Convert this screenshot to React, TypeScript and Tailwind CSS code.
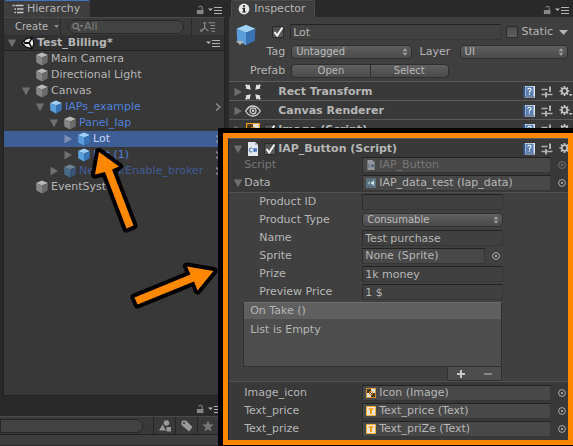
import type { ReactNode } from "react";
import { clsx } from "clsx";

/* ---------- icons ---------- */

function Cube({ tone = "gray", className = "size-3.5" }: { tone?: "gray" | "blue"; className?: string }) {
  const c = tone === "blue" ? ["#9fd0f5", "#5a9fdc", "#3a73b4"] : ["#b9b9b9", "#868686", "#6a6a6a"];
  return (
    <svg viewBox="0 0 14 14" className={clsx("shrink-0", className)} aria-hidden="true">
      <path d="M7 .5 13 3 7 5.6 1 3Z" fill={c[0]} />
      <path d="M1 3 7 5.6V13.5L1.4 10.6Z" fill={c[1]} />
      <path d="M13 3 7 5.6V13.5l5.6-2.9Z" fill={c[2]} />
    </svg>
  );
}

function Triangle({ open, light }: { open?: boolean; light?: boolean }) {
  return (
    <svg viewBox="0 0 10 10" className="size-2.5 shrink-0" aria-hidden="true">
      <path d={open ? "M.8 1.5h8.4L5 9.2Z" : "M1.5.8v8.4L9 5Z"} fill={light ? "#7f90b5" : "#6f6f6f"} />
    </svg>
  );
}

function UnityLogo() {
  return (
    <svg viewBox="0 0 14 14" className="size-3.5 shrink-0" aria-hidden="true">
      <path d="M.3 7 4.5 2.4 11.3.5 13.5 7l-2.2 6.5-6.8-1.9Z" fill="#0c0c0c" />
      <path d="M4.800 3.700 9.800 2.200 7.800 5.900H3.500Z M3.500 8.100h4.300l2 3.700-5-1.500L2 7l.8-1Z M11.200 2.900 12.300 7l-1.100 4.100L9 7Z" fill="#efefef" />
    </svg>
  );
}

function Lock() {
  return (
    <svg viewBox="0 0 9 10" className="h-2.5 w-2 shrink-0" aria-hidden="true">
      <path d="M1 5h7.4v4.6H1Z" fill="#858585" />
      <path d="M3 2.2Q3.6.8 5 .8q2 0 2 2V5" fill="none" stroke="#858585" strokeWidth="1.2" />
    </svg>
  );
}

function PaneMenu() {
  return (
    <svg viewBox="0 0 14 8" className="h-2 w-3.5 shrink-0" aria-hidden="true">
      <path d="M0 2.5h5L2.5 5Z" fill="#b4b4b4" />
      <path d="M6 1.5h8M6 4.500h8M6 7.500h8" stroke="#b4b4b4" />
    </svg>
  );
}

function ListIcon() {
  return (
    <svg viewBox="0 0 11 10" className="h-2.5 w-3 shrink-0" aria-hidden="true">
      <path d="M0 1.5h2M3 1.5h8M2 5h1.5M4.5 5H11M2 8.5h1.5M4.5 8.5H11" stroke="#c8c8c8" strokeWidth="1.4" />
    </svg>
  );
}

function InfoIcon() {
  return (
    <svg viewBox="0 0 12 12" className="size-3 shrink-0" aria-hidden="true">
      <circle cx="6" cy="6" r="5.4" fill="#e6e6e6" />
      <path d="M5 2.2h2v1.6H5ZM4.4 4.8H7v3.6h.8v1.1H4.3V8.4h.9V5.9h-.8Z" fill="#222" />
    </svg>
  );
}

function AxisIcon() {
  return (
    <svg viewBox="0 0 17 12" className="h-3 w-4 shrink-0" aria-hidden="true" fill="none" stroke="#909090">
      <path d="M5 1v6L.8 10.5M5 7l4 3.5M9 1.5h7M11 4.5h5M11 7.5h5M12 10.5h4" strokeWidth="1.1" />
      <path d="M3.6 2.5 5 .7l1.4 1.8M.8 8.5v2h2" strokeWidth=".9" />
    </svg>
  );
}

function SearchIcon() {
  return (
    <svg viewBox="0 0 12 10" className="h-2.5 w-3 shrink-0" aria-hidden="true">
      <circle cx="3.6" cy="4" r="2.7" fill="none" stroke="#828282" strokeWidth="1.2" />
      <path d="m5.6 6 2.6 3" stroke="#828282" strokeWidth="1.4" />
      <path d="M7.5 3h4L9.500 5.200Z" fill="#828282" />
    </svg>
  );
}

function Book() {
  return (
    <svg viewBox="0 0 12 13" className="h-3.5 w-3 shrink-0" aria-hidden="true">
      <path d="M0 .5h12v12H1.500L0 11Z" fill="#dfe6ee" />
      <path d="M0 .5h2v12H1.500L0 11Z" fill="#33507c" />
      <path d="M2.500 1.200h8v9.500h-8Z" fill="#5880b3" />
      <path d="M4.700 4.200q.2-1.400 1.700-1.400 1.700 0 1.700 1.400 0 1-1.700 1.900v1M6.400 8v1.200" fill="none" stroke="#fff" strokeWidth="1.100" />
      <path d="M2 11.500h9.500" stroke="#1f3558" />
    </svg>
  );
}

function Sliders() {
  return (
    <svg viewBox="0 0 11 12" className="h-3 w-3 shrink-0" aria-hidden="true" stroke="#b0b0b0" fill="none">
      <path d="M0 3.500h6M0 8.500h11" strokeWidth="1.300" />
      <path d="M8.500.5v5.500M4.500 6v5.500" strokeWidth="2" />
    </svg>
  );
}

function Gear() {
  return (
    <svg viewBox="0 0 13 12" className="h-3 w-3.5 shrink-0" aria-hidden="true">
      <circle cx="5" cy="5" r="2.700" fill="none" stroke="#c4c4c4" strokeWidth="1.600" />
      <path d="M5 0v2M5 8v2M0 5h2M8 5h2M1.500 1.500l1.400 1.400M7.100 7.100l1.400 1.400M8.500 1.500 7.100 2.900M2.900 7.100 1.500 8.500" stroke="#c4c4c4" strokeWidth="1.700" />
      <path d="M9.500 8h3.500l-1.700 2.500Z" fill="#c4c4c4" />
    </svg>
  );
}

function RectTransformIcon() {
  return (
    <svg viewBox="0 0 14 14" className="size-4 shrink-0" aria-hidden="true" fill="#e2e2e2">
      <path d="M0 1.500 1.500 0l.8 1L4 .500 5 5 .5 4l.7-1.500ZM14 1.500 12.500 0l-.8 1L10 .500 9 5l4.500-1-.7-1.500ZM0 12.500 1.500 14l.8-1 1.700.5L5 9l-4.500 1 .7 1.500ZM14 12.500 12.500 14l-.8-1-1.700.5L9 9l4.500 1-.7 1.500Z" />
    </svg>
  );
}

function EyeIcon() {
  return (
    <svg viewBox="0 0 16 12" className="h-3 w-4 shrink-0" aria-hidden="true" fill="none" stroke="#d0d0d0">
      <path d="M.7 6Q3.500 1 8 1t7.300 5Q12.500 11 8 11T.7 6Z" strokeWidth="1.300" />
      <circle cx="8" cy="5.800" r="3" strokeWidth="1.200" />
      <circle cx="8" cy="5.800" r="1.300" fill="#d0d0d0" stroke="none" />
    </svg>
  );
}

function ImageIcon({ className = "size-2.5" }: { className?: string }) {
  return (
    <svg viewBox="0 0 10 10" className={clsx("shrink-0", className)} aria-hidden="true">
      <path d="M0 0h10v10H0Z" fill="#f0a01e" />
      <path d="M.8.8h8.400v8.400H.8Z" fill="#4b3a22" />
      <path d="M5 .8h4.200V5H5ZM.8 5H5v4.200H.8Z" fill="#e6e2da" />
      <circle cx="5" cy="5" r="1.700" fill="none" stroke="#e08a10" />
    </svg>
  );
}

function TextIcon() {
  return (
    <svg viewBox="0 0 10 10" className="size-2.5 shrink-0" aria-hidden="true">
      <path d="M.5.5h9v9h-9Z" fill="#efe6d2" stroke="#f0b040" />
      <path d="M2.700 2.200h4.600v1.600H6V8H4V3.800H2.700Z" fill="#f39a12" />
    </svg>
  );
}

function ScriptIcon({ className = "h-3.5 w-2.5" }: { className?: string }) {
  return (
    <svg viewBox="0 0 10 14" className={clsx("shrink-0", className)} aria-hidden="true">
      <path d="M0 0h7l3 3v11H0Z" fill="#e3e8ee" />
      <path d="M7 0v3h3Z" fill="#a9b4c2" />
      <path d="M4.400 6.600Q3.800 6 3 6 1.300 6 1.300 8T3 10q.8 0 1.400-.6M6.300 6v4M8 6v4M5.300 7.300H9M5.300 8.800H9" fill="none" stroke="#3a66b8" />
    </svg>
  );
}

function AssetIcon() {
  return (
    <svg viewBox="0 0 10 10" className="size-2.5 shrink-0" aria-hidden="true">
      <path d="M0 0h10v10H0Z" fill="#587080" />
      <path d="M1.500 5 4 3v4Z" fill="#9db6c2" />
      <path d="M8.200 1.800 4.800 5l3.400 3.200Z" fill="#b4cad3" />
      <circle cx="6.500" cy="5" r="1.200" fill="#e4eef2" />
    </svg>
  );
}

/* ---------- shared controls ---------- */

const fieldEdge = "border border-[#2c2c2c] border-t-[#222] border-r-[#363636] border-b-[#363636]";

function Checkbox({ label, checked }: { label: string; checked?: boolean }) {
  return (
    <span className="relative grid size-3 shrink-0 place-items-center">
      <input
        type="checkbox"
        aria-label={label}
        defaultChecked={checked}
        className="peer size-3 appearance-none rounded-xs border border-[#2a2a2a] bg-linear-to-b from-[#4c4c4c] to-[#606060]"
      />
      <svg viewBox="0 0 12 12" className="pointer-events-none absolute inset-0 hidden size-3 peer-checked:block" aria-hidden="true">
        <path d="M2.500 6 5.200 9.500 10.500 1.500" fill="none" stroke="#f4f4f4" strokeWidth="2" />
      </svg>
    </span>
  );
}

function Popup({ id, value, className }: { id: string; value: string; className?: string }) {
  return (
    <span className={clsx("relative flex h-3.5 min-w-0", className)}>
      <select
        id={id}
        className="h-3.5 w-full appearance-none rounded-sm border border-[#303030] bg-linear-to-b from-[#606060] to-[#4a4a4a] pl-1 text-[10px] leading-3 text-[#bdbdbd]"
      >
        <option>{value}</option>
      </select>
      <svg viewBox="0 0 6 8" className="pointer-events-none absolute top-[3px] right-1 h-2 w-1.5" aria-hidden="true">
        <path d="M.5 3.200 3 .2l2.500 3ZM.5 4.800h5L3 7.800Z" fill="#a0a0a0" />
      </svg>
    </span>
  );
}

function Picker({ label, dim }: { label: string; dim?: boolean }) {
  return (
    <button aria-label={label} className={clsx("grid w-[22px] shrink-0 place-items-center", dim && "opacity-50")}>
      <svg viewBox="0 0 8 8" className="size-2" aria-hidden="true">
        <circle cx="4" cy="4" r="3.400" fill="none" stroke="#b8b8b8" strokeWidth=".9" />
        <circle cx="4" cy="4" r="1.100" fill="#b8b8b8" />
      </svg>
    </button>
  );
}

function Row({ label, htmlFor, nested, dim, fold, children }: {
  label: string; htmlFor?: string; nested?: boolean; dim?: boolean; fold?: boolean; children: ReactNode;
}) {
  return (
    <div className={clsx("flex h-[18px] items-center", nested && "pr-[70px]", dim && "text-[#777]")}>
      <span className="flex w-[133px] shrink-0 items-center">
        <span className={clsx("flex shrink-0 items-center pl-1", nested ? "w-[30px]" : "w-[15px]")}>{fold && <Triangle open />}</span>
        <label htmlFor={htmlFor}>{label}</label>
      </span>
      {children}
    </div>
  );
}

function ObjectField({ id, icon, text, dim }: { id: string; icon?: ReactNode; text: string; dim?: boolean }) {
  return (
    <>
      <button
        id={id}
        className={clsx("flex h-4 min-w-0 flex-1 items-center gap-[3px] bg-[#484848] text-left whitespace-nowrap", fieldEdge, icon ? "pl-[3px]" : "pl-0.5")}
      >
        {icon && <span className={clsx("flex", dim && "opacity-50")}>{icon}</span>}
        {text}
      </button>
      <Picker label={`Pick ${text}`} dim={dim} />
    </>
  );
}

function TextField({ id, value }: { id: string; value: string }) {
  return <input id={id} defaultValue={value} className={clsx("h-4 min-w-0 flex-1 bg-[#404040] px-0.5", fieldEdge)} />;
}

function ComponentHeader({ icon, title, open, checkbox }: { icon: ReactNode; title: string; open?: boolean; checkbox?: boolean }) {
  return (
    <header
      className={clsx(
        "flex shrink-0 items-center border-t border-[#5a5a5a] bg-[#393939] pt-0.5 pl-1 font-bold whitespace-nowrap",
        open ? "h-[18px]" : "h-[19px]",
      )}
    >
      <Triangle open={open} />
      <span className="ml-0.5 flex w-4 shrink-0 justify-center">{icon}</span>
      <span className="mr-0.5 ml-[3px] flex w-3 shrink-0">{checkbox && <Checkbox label={`Enable ${title}`} checked />}</span>
      <h2 className="min-w-0 flex-1">{title}</h2>
      <span className="flex shrink-0 items-center gap-1.5">
        <Book />
        <Sliders />
        <Gear />
      </span>
    </header>
  );
}

/* ---------- hierarchy ---------- */

type Node = { name: string; depth: string; tone?: "blue"; fold?: "open" | "closed"; text?: string; arrow?: boolean; selected?: boolean; faded?: boolean };

const nodes: Node[] = [
  { name: "Main Camera", depth: "pl-[17px]" },
  { name: "Directional Light", depth: "pl-[17px]" },
  { name: "Canvas", depth: "pl-[17px]", fold: "open" },
  { name: "IAPs_example", depth: "pl-[31px]", tone: "blue", fold: "open", text: "text-[#4f80dc]", arrow: true },
  { name: "Panel_Iap", depth: "pl-[45px]", fold: "open", text: "text-[#4f80dc]" },
  { name: "Lot", depth: "pl-[59px]", tone: "blue", fold: "closed", text: "text-[#c3d5fb]", arrow: true, selected: true },
  { name: "Lot (1)", depth: "pl-[59px]", tone: "blue", fold: "closed", text: "text-[#4f80dc]", arrow: true },
  { name: "NetworkEnable_broker", depth: "pl-[45px]", tone: "blue", fold: "closed", text: "text-[#3f5c96]", arrow: true, faded: true },
  { name: "EventSystem", depth: "pl-[17px]" },
];

function TreeRow({ node }: { node: Node }) {
  return (
    <li className={clsx("flex h-4 items-center whitespace-nowrap", node.depth, node.text, node.selected && "bg-[#3e5f96]")}>
      <span className="mr-1 flex w-2.5 shrink-0">{node.fold && <Triangle open={node.fold === "open"} light={node.selected} />}</span>
      <span className={clsx("mr-0.5 flex", node.faded && "opacity-50")}>
        <Cube tone={node.tone} />
      </span>
      <span className="flex-1">{node.name}</span>
      {node.arrow && (
        <svg viewBox="0 0 6 8" className="mr-[3px] h-2 w-1.5 shrink-0" aria-hidden="true">
          <path d="m1 .5 4 3.500-4 3.500" fill="none" stroke="#8f8f8f" strokeWidth="1.400" />
        </svg>
      )}
    </li>
  );
}

function PaneControls() {
  return (
    <span className="ml-auto flex items-center gap-1 pt-0.5">
      <Lock />
      <PaneMenu />
    </span>
  );
}

function LeftColumn() {
  return (
    <div className="flex w-2/5 shrink-0 flex-col pr-1">
      <section className="flex min-h-0 flex-1 flex-col pl-[3px]">
        <div className="flex h-[17px] shrink-0 items-center pr-[3px]">
          <h1 className="ml-px flex h-full items-center gap-[3px] rounded-t-xs border-t border-[#4374b8] bg-[#3e3e3e] pr-2.5 pl-2">
            <ListIcon />
            Hierarchy
          </h1>
          <PaneControls />
        </div>
        <div className="flex h-[18px] shrink-0 items-center border-x border-t border-[#252525] border-t-[#4a4a4a] bg-[#3a3a3a]">
          <button className="flex h-full w-[57px] items-center gap-1.5 border-r border-[#2a2a2a] pl-[11px] text-[10px]">
            Create
            <svg viewBox="0 0 5 3" className="h-[3px] w-[5px]" aria-hidden="true">
              <path d="M0 0h5L2.500 3Z" fill="#8f8f8f" />
            </svg>
          </button>
          <label className="mx-[7px] flex h-3.5 min-w-0 flex-1 items-center rounded-full border border-[#282828] bg-[#424242] pl-[3px]">
            <SearchIcon />
            <input aria-label="Search hierarchy" placeholder="All" className="w-full min-w-0 bg-transparent placeholder:text-[#7d7d7d]" />
          </label>
          <button aria-label="Sorting" className="grid h-full w-[33px] place-items-center border-l border-[#2a2a2a]">
            <AxisIcon />
          </button>
        </div>
        <div className="flex h-4 shrink-0 items-center border-x border-b border-[#222] bg-[#313131] pr-1 pl-[3px] font-bold">
          <Triangle open />
          <span className="mr-0.5 ml-1 flex">
            <UnityLogo />
          </span>
          <span className="flex-1">Test_Billing*</span>
          <PaneMenu />
        </div>
        <ul className="min-h-0 flex-1 border-x border-b border-[#222] bg-[#383838]">
          {nodes.map((n) => (
            <TreeRow key={n.name} node={n} />
          ))}
        </ul>
      </section>
      <section className="shrink-0">
        <div className="flex h-5 items-center pt-1 pr-[3px]">
          <PaneControls />
        </div>
        <div className="flex h-[18px] items-center border-t border-[#4a4a4a] bg-[#393939]">
          <input aria-label="Search project" className="mr-2.5 h-3.5 min-w-0 flex-1 rounded-r-full border border-[#282828] bg-[#424242]" />
          <button aria-label="Search by type" className="grid h-full w-[22px] place-items-center border-l border-[#262626]">
            <svg viewBox="0 0 12 12" className="size-3" aria-hidden="true" fill="#999">
              <circle cx="7.500" cy="3" r="2.800" />
              <path d="M3.500 4.500 7 10.500H0ZM7.500 7H12v4.500H7.500Z" />
            </svg>
          </button>
          <button aria-label="Search by label" className="grid h-full w-[22px] place-items-center border-l border-[#262626]">
            <svg viewBox="0 0 12 12" className="size-3" aria-hidden="true">
              <path fillRule="evenodd" d="M.5 1.500 1.500.5h3.500l6.500 6.500-3.500 4.500L.5 5ZM3 2a1 1 0 1 0 .1 0Z" fill="#999" />
            </svg>
          </button>
          <button aria-label="Favorites" className="grid h-full w-[28px] place-items-center border-l border-[#262626] pr-2">
            <svg viewBox="0 0 12 12" className="size-3" aria-hidden="true">
              <path d="m6 .5 1.600 3.800 4.100.3-3.100 2.700 1 4.100L6 9.200 2.400 11.400l1-4.100L.3 4.600l4.100-.3Z" fill="#777" />
            </svg>
          </button>
        </div>
        <div className="h-3 border-y border-t-[#222] border-b-[#2a2a2a] bg-[#3e3e3e]" />
      </section>
    </div>
  );
}

/* ---------- inspector ---------- */

function ObjectHeader() {
  return (
    <div className="flex h-16 shrink-0 flex-col gap-[5px] bg-[#3f3f3f] pt-[7px] pr-[5px]">
      <div className="flex h-4 items-center">
        <span className="relative ml-1.5 flex h-4 w-[37px] shrink-0">
          <Cube tone="blue" className="size-[22px]" />
          <svg viewBox="0 0 8 4" className="absolute top-[17px] left-px h-1 w-2" aria-hidden="true">
            <path d="M0 0h8L4 4Z" fill="#b5b5b5" />
          </svg>
        </span>
        <Checkbox label="Active" checked />
        <input aria-label="Name" defaultValue="Lot" className={clsx("ml-1.5 h-4 min-w-0 flex-1 bg-[#414141] px-0.5", fieldEdge)} />
        <span className="ml-[5px] flex items-center gap-1">
          <Checkbox label="Static" />
          Static
        </span>
        <svg viewBox="0 0 9 5" className="ml-1.5 h-[5px] w-[9px]" aria-hidden="true">
          <path d="M0 0h9L4.500 5Z" fill="#b5b5b5" />
        </svg>
      </div>
      <div className="flex h-3.5 items-center">
        <label htmlFor="tag" className="w-[62px] shrink-0 pr-1.5 text-right">Tag</label>
        <Popup id="tag" value="Untagged" className="flex-10" />
        <label htmlFor="layer" className="w-12 shrink-0 pl-2">Layer</label>
        <Popup id="layer" value="UI" className="flex-9" />
      </div>
      <div className="flex h-3.5 items-center">
        <span className="w-[62px] shrink-0 pr-1.5 text-right">Prefab</span>
        <div className="mr-[119px] flex h-3.5 flex-1 overflow-hidden rounded-sm border border-[#303030] bg-linear-to-b from-[#606060] to-[#4a4a4a] text-[10px] leading-3">
          <button className="flex-1 border-r border-[#303030]">Open</button>
          <button className="flex-1">Select</button>
        </div>
      </div>
    </div>
  );
}

function IapButton() {
  return (
    <section className="relative shrink-0 bg-[#393939]">
      <ComponentHeader open checkbox icon={<ScriptIcon />} title="IAP_Button (Script)" />
      <Row label="Script" htmlFor="script" dim>
        <ObjectField id="script" icon={<ScriptIcon className="h-2.5 w-2.5" />} text="IAP_Button" dim />
      </Row>
      <Row label="Data" htmlFor="data" fold>
        <ObjectField id="data" icon={<AssetIcon />} text="IAP_data_test (Iap_data)" />
      </Row>
      <div className="border-y border-[#505050] bg-[#404040]">
        <Row label="Product ID" htmlFor="pid" nested>
          <TextField id="pid" value="" />
        </Row>
        <Row label="Product Type" htmlFor="ptype" nested>
          <Popup id="ptype" value="Consumable" className="flex-1" />
        </Row>
        <Row label="Name" htmlFor="pname" nested>
          <TextField id="pname" value="Test purchase" />
        </Row>
        <Row label="Sprite" htmlFor="sprite" nested>
          <div className="-mr-1 flex min-w-0 flex-1">
            <ObjectField id="sprite" text="None (Sprite)" />
          </div>
        </Row>
        <Row label="Prize" htmlFor="prize" nested>
          <TextField id="prize" value="1k money" />
        </Row>
        <Row label="Preview Price" htmlFor="price" nested>
          <TextField id="price" value="1 $" />
        </Row>
        <div className="mt-px mr-[71px] ml-3.5">
          <div className="h-[65px] rounded-t-xs rounded-bl-xs border border-[#303030] border-t-[#6c6c6c] bg-[#4d4d4d]">
            <h3 className="h-4 bg-[#5f5f5f] pl-1.5 leading-4">On Take ()</h3>
            <p className="pt-[3px] pl-1.5 leading-4">List is Empty</p>
          </div>
          <div className="ml-auto flex h-3.5 w-[55px] items-center justify-around rounded-b-xs border border-t-0 border-[#303030] bg-[#4d4d4d]">
            <button aria-label="Add" className="flex">
              <svg viewBox="0 0 8 8" className="size-2" aria-hidden="true">
                <path d="M0 4h8M4 0v8" stroke="#c8c8c8" strokeWidth="2" />
              </svg>
            </button>
            <button aria-label="Remove" className="flex">
              <svg viewBox="0 0 8 8" className="size-2" aria-hidden="true">
                <path d="M0 4h8" stroke="#858585" strokeWidth="2" />
              </svg>
            </button>
          </div>
        </div>
      </div>
      <div className="pt-0.5 pb-0.5">
        <Row label="Image_icon" htmlFor="img">
          <ObjectField id="img" icon={<ImageIcon />} text="Icon (Image)" />
        </Row>
        <Row label="Text_price" htmlFor="tprice">
          <ObjectField id="tprice" icon={<TextIcon />} text="Text_price (Text)" />
        </Row>
        <Row label="Text_prize" htmlFor="tprize">
          <ObjectField id="tprize" icon={<TextIcon />} text="Text_priZe (Text)" />
        </Row>
      </div>
      <div className="pointer-events-none absolute -inset-y-[5px] right-0 -left-1.5 border-[5px] border-[#ff8800] ring-5 ring-black" />
    </section>
  );
}

function Inspector() {
  return (
    <section className="flex min-w-0 flex-1 flex-col">
      <div className="flex h-[17px] shrink-0 items-center pr-1">
        <h1 className="ml-0.5 flex h-full items-center gap-1 rounded-t-xs border border-b-0 border-[#4a4a4a] bg-[#3e3e3e] pr-2 pl-1.5">
          <InfoIcon />
          Inspector
        </h1>
        <PaneControls />
      </div>
      <ObjectHeader />
      <ComponentHeader icon={<RectTransformIcon />} title="Rect Transform" />
      <ComponentHeader icon={<EyeIcon />} title="Canvas Renderer" />
      <ComponentHeader icon={<ImageIcon className="size-3.5" />} title="Image (Script)" checkbox />
      <IapButton />
    </section>
  );
}

export default function App() {
  return (
    <main className="relative flex h-screen w-full overflow-hidden bg-[#292929] font-['DejaVu_Sans','Verdana',sans-serif] text-[11px] leading-[14px] text-[#b6b6b6]">
      <LeftColumn />
      <Inspector />
      <svg viewBox="0 0 220 310" className="pointer-events-none absolute top-0 left-0 h-[310px] w-[220px]" aria-hidden="true">
        <g fill="#ff8800" stroke="#000" strokeWidth="8" strokeLinejoin="round" style={{ paintOrder: "stroke" }}>
          <path d="M99 152 119 166.500 112 169.500 133.500 225.500 126.500 228.500 105 172 95 174.500Z" />
          <path d="M213.500 271 197.500 290.500 194 281.500 137.500 304.500 134.500 297.500 190.500 274.500 187 266.500Z" />
        </g>
      </svg>
    </main>
  );
}
